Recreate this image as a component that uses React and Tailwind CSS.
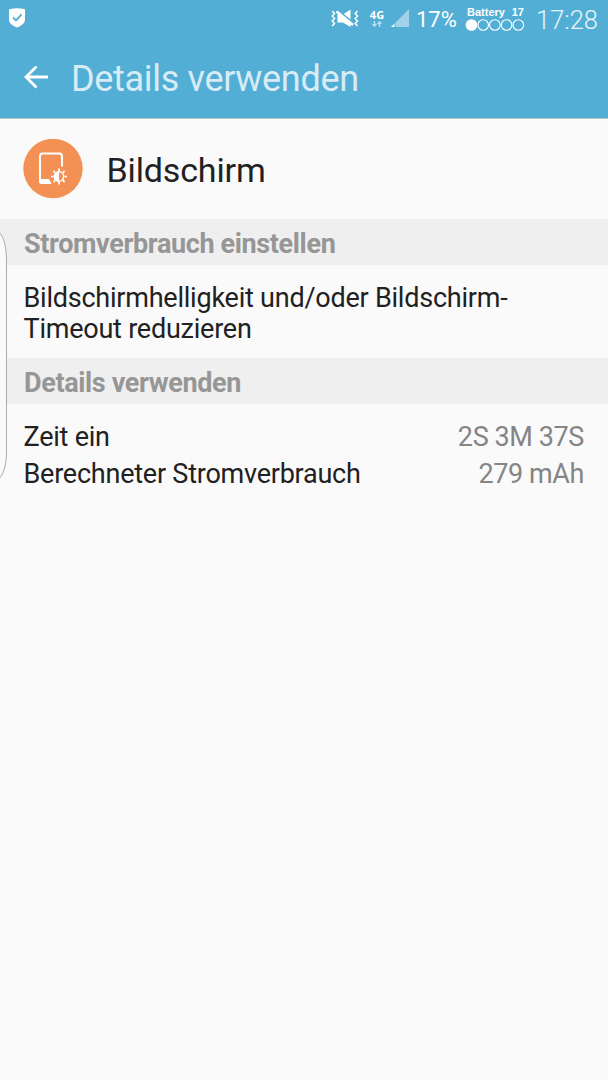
import React from 'react';

const usageRows = [
  { label: 'Zeit ein', value: '2S 3M 37S' },
  { label: 'Berechneter Stromverbrauch', value: '279 mAh' },
];

function ShieldIcon() {
  return (
    <svg className="h-[20px] w-[18px]" viewBox="0 0 18 20" fill="none">
      <path d="M1 1.2Q9 -0.6 17 1.2V11.5C17 16 12.5 17.8 9 19.6C5.500 17.800 1 16 1 11.500Z" fill="#fff" />
      <path d="M5 9.300L8 12.300L13.600 6.400" stroke="#52aed5" strokeWidth="1.900" />
    </svg>
  );
}

function VibrateIcon() {
  return (
    <svg className="h-[20px] w-[28px]" viewBox="0 0 28 20" fill="none">
      <path d="M6.500 5.500H12L19.500 0.500V18L12 13.500H6.500Z" fill="#fff" />
      <path d="M6.500 1L23 14.500" stroke="#52aed5" strokeWidth="1.800" />
      <path d="M5.500 2.500L22 16" stroke="#fff" strokeWidth="2.600" />
      <path d="M1.200 2L3.500 4.500L1.200 7L3.500 9.500L1.200 12L3.500 14.500L1.200 17M26.500 2L24.200 4.500L26.500 7L24.200 9.500L26.500 12L24.200 14.500L26.500 17" stroke="#fff" strokeWidth="1.500" />
    </svg>
  );
}

function NetworkType() {
  return (
    <div className="flex w-[16px] flex-col items-center text-white">
      <span className="text-[11px] leading-[11px] font-bold font-['Open_Sans',sans-serif]">4G</span>
      <svg className="mt-px h-[6px] w-[10px]" viewBox="0 0 10 6" fill="none" opacity="0.6">
        <path d="M2.500 0V5M0.500 3L2.500 5.200L4.500 3M7.500 6V1M5.500 3L7.500 0.800L9.500 3" stroke="#fff" strokeWidth="1.400" />
      </svg>
    </div>
  );
}

function SignalIcon() {
  return (
    <svg className="h-[18px] w-[18px]" viewBox="0 0 18 18">
      <path d="M4.500 13.500L18 0V18H4.500Z" fill="#fff" opacity="0.45" />
      <path d="M0 18L3.500 14.500V18Z" fill="#fff" />
    </svg>
  );
}

function BatteryWidget() {
  return (
    <div className="w-[60px] text-white">
      <div className="flex justify-between pr-[1px] pl-[2px] text-[11px] leading-[12px] font-bold font-['Liberation_Sans',sans-serif]">
        <span>Battery</span>
        <span>17</span>
      </div>
      <svg className="h-[13px] w-[60px]" viewBox="0 0 60 13" fill="none" stroke="#fff" strokeWidth="1.100">
        <circle cx="6.500" cy="7" r="5.300" fill="#fff" />
        <circle cx="18.200" cy="7" r="5.300" />
        <circle cx="29.900" cy="7" r="5.300" />
        <circle cx="41.600" cy="7" r="5.300" />
        <circle cx="53.300" cy="7" r="5.300" />
      </svg>
    </div>
  );
}

function StatusBar() {
  return (
    <div className="flex h-[38px] items-start pl-[8px] pr-[10px]">
      <div className="mt-[8px]"><ShieldIcon /></div>
      <div className="mt-[9px] ml-auto"><VibrateIcon /></div>
      <div className="mt-[9px] ml-[10px]"><NetworkType /></div>
      <div className="mt-[9px] ml-[6px]"><SignalIcon /></div>
      <span className="mt-[7px] ml-[7px] w-[41px] text-[22px] leading-[26px] whitespace-nowrap text-white">17%</span>
      <div className="mt-[6px] ml-[8px]"><BatteryWidget /></div>
      <span className="mt-[5px] ml-[11px] w-[62px] text-[25.5px] leading-[30px] font-light whitespace-nowrap text-[#e6f4fa]">17:28</span>
    </div>
  );
}

function DisplayBadge() {
  return (
    <svg className="h-[60px] w-[60px]" viewBox="0 0 60 60" fill="none">
      <circle cx="30" cy="29.500" r="29.700" fill="#f29153" />
      <path d="M17 44V17.500Q17 14.500 19.500 14.500H36.500Q39 14.500 39 17.500V27.500" stroke="#fff" strokeWidth="2" />
      <path d="M16.200 40H26L28.500 45H18.200Q16.200 45 16.200 43Z" fill="#fff" />
      <circle cx="36" cy="37.500" r="4.700" stroke="#fff" strokeWidth="1.500" />
      <path d="M36 32.500A5 5 0 0 0 36 42.500Z" fill="#fff" />
      <path d="M36 29.500V32M36 43V45.500M28 37.500H30.500M41.500 37.500H44M30.400 31.900L32.100 33.600M39.900 41.400L41.600 43.100M30.400 43.100L32.100 41.400M39.900 33.600L41.600 31.900" stroke="#fff" strokeWidth="1.700" />
    </svg>
  );
}

function SectionHeader({ children }) {
  return (
    <h2 className="h-[46.4px] bg-[#efefef] pl-[24px] text-[27px] leading-[50px] font-bold tracking-[-0.36px] text-[#969696]">
      {children}
    </h2>
  );
}

export default function App() {
  return (
    <div className="relative h-[1080px] w-[608px] overflow-hidden bg-[#fafafa] text-[#212121] font-['Roboto',sans-serif]">
      <header className="h-[119px] border-b border-[#b7c5cb] bg-[#52aed5]">
        <StatusBar />
        <div className="flex h-[80px] items-center pl-[24px]">
          <svg className="h-[24px] w-[24px]" viewBox="0 0 24 24" fill="none" stroke="#fff" strokeWidth="2.800">
            <path d="M24 11H2M12.500 0.500L2 11L12.500 21.500" />
          </svg>
          <h1 className="mt-[1px] ml-[23px] text-[36px] leading-[42px] tracking-[-0.32px] whitespace-nowrap text-[#d7ecf5]">Details verwenden</h1>
        </div>
      </header>

      <div className="flex h-[100px] items-center pl-[23px]">
        <DisplayBadge />
        <span className="mt-[1px] ml-[23.5px] text-[34px] leading-[40px] tracking-[-0.15px]">Bildschirm</span>
      </div>

      <SectionHeader>Stromverbrauch einstellen</SectionHeader>
      <p className="h-[92.200px] pt-[17.600px] pl-[23.500px] text-[27px] leading-[31px] tracking-[-0.23px]">
        Bildschirmhelligkeit und/oder Bildschirm-
        <br />
        Timeout reduzieren
      </p>

      <SectionHeader>Details verwenden</SectionHeader>
      <dl className="pt-[15px] pr-[24px] pl-[23.500px] text-[27px] leading-[37px] tracking-[-0.23px]">
        {usageRows.map((row) => (
          <div key={row.label} className="flex justify-between">
            <dt>{row.label}</dt>
            <dd className="tracking-[-0.4px] text-[#858585]">{row.value}</dd>
          </div>
        ))}
      </dl>

      {/* edge panel handle, sits over the list */}
      <svg className="absolute top-[230px] left-0 h-[252px] w-[9px]" viewBox="0 0 9 252">
        <path d="M-1 2C4.500 8 6.500 18 6.500 32V220C6.500 234 4.500 242 -1 249Z" fill="#fafafa" stroke="#aaa" strokeWidth="1" />
      </svg>
    </div>
  );
}
